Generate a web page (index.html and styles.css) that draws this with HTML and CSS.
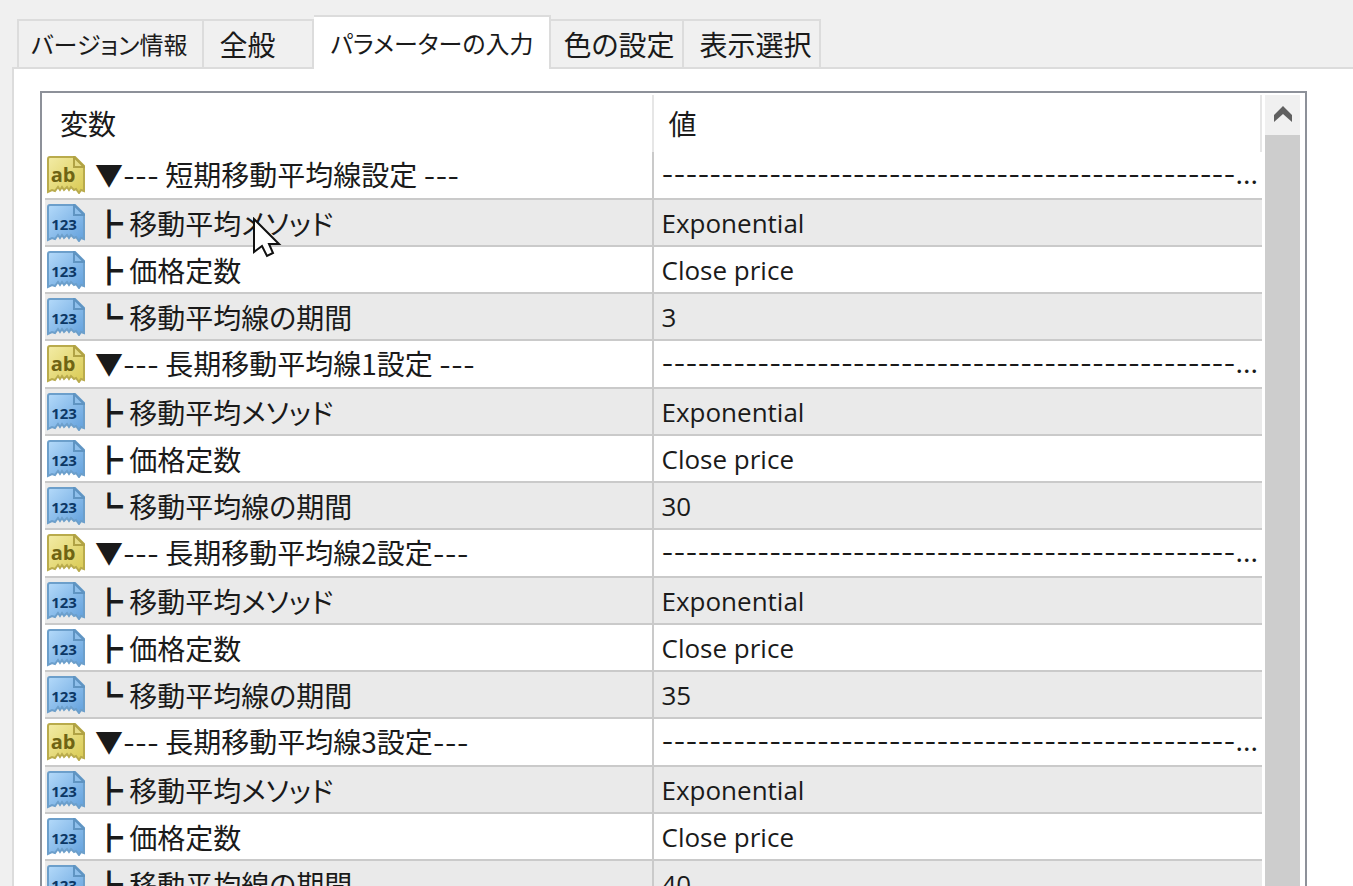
FILE: index.html
```
<!DOCTYPE html>
<html lang="ja">
<head>
    <meta charset="UTF-8">
    <meta name="viewport" content="width=device-width, initial-scale=1.0">
    <title>パラメーターの入力</title>
    <link rel="stylesheet" href="styles.css">
</head>
<body>
    <!-- shared icon shapes -->
    <svg class="defs" aria-hidden="true">
        <defs>
            <linearGradient id="yellow" x1="0" y1="0" x2="1" y2="1">
                <stop offset="0" stop-color="#f3eca6"/>
                <stop offset="1" stop-color="#d9ca52"/>
            </linearGradient>
            <linearGradient id="blue" x1="0" y1="0" x2="1" y2="1">
                <stop offset="0" stop-color="#b4dafa"/>
                <stop offset="1" stop-color="#62a0dc"/>
            </linearGradient>
            <path id="sheet" d="M3 1H28L37 10V35L34 34L32 37L29 33L27 34L24 31L22 34L20 31L17 34L15 31L13 34L11 31L8 35L5 34L1 36V3Q1 1 3 1Z"/>
        </defs>
        <symbol id="sheet-yellow" viewBox="0 0 38 38">
            <use href="#sheet" fill="url(#yellow)" stroke="#b9ab4c" stroke-width="2"/>
            <path d="M27 1V11H37Z" fill="#e6dc86" stroke="#b0a244" stroke-width="2"/>
        </symbol>
        <symbol id="sheet-blue" viewBox="0 0 38 38">
            <use href="#sheet" fill="url(#blue)" stroke="#6c9fcb" stroke-width="2"/>
            <path d="M27 1V11H37Z" fill="#8fc0ec" stroke="#5f94c2" stroke-width="2"/>
        </symbol>
    </svg>

    <div class="tabs" role="tablist">
        <button class="tab tab-version" role="tab">バージョン情報</button>
        <button class="tab tab-general" role="tab">全般</button>
        <button class="tab active" role="tab" aria-selected="true">パラメーターの入力</button>
        <button class="tab tab-color" role="tab">色の設定</button>
        <button class="tab tab-display" role="tab">表示選択</button>
    </div>

    <div class="panel" role="tabpanel">
        <div class="list">
            <table>
                <thead>
                    <tr><th>変数</th><th>値</th></tr>
                </thead>
                <tbody>
                    <tr class="group"><td><div class="name"><svg class="icon ab"><use href="#sheet-yellow"/><text x="16" y="26">ab</text></svg><span>▼<span class="dash">---</span> 短期移動平均線設定 <span class="dash">---</span></span></div></td><td class="line">------------------------------------------------...</td></tr>
                    <tr><td><div class="name"><svg class="icon num"><use href="#sheet-blue"/><text x="17" y="26">123</text></svg><span>┣ 移動平均メソッド</span></div></td><td>Exponential</td></tr>
                    <tr><td><div class="name"><svg class="icon num"><use href="#sheet-blue"/><text x="17" y="26">123</text></svg><span>┣ 価格定数</span></div></td><td>Close price</td></tr>
                    <tr><td><div class="name"><svg class="icon num"><use href="#sheet-blue"/><text x="17" y="26">123</text></svg><span>┗ 移動平均線の期間</span></div></td><td>3</td></tr>
                </tbody>
                <tbody>
                    <tr class="group"><td><div class="name"><svg class="icon ab"><use href="#sheet-yellow"/><text x="16" y="26">ab</text></svg><span>▼<span class="dash">---</span> 長期移動平均線1設定 <span class="dash">---</span></span></div></td><td class="line">------------------------------------------------...</td></tr>
                    <tr><td><div class="name"><svg class="icon num"><use href="#sheet-blue"/><text x="17" y="26">123</text></svg><span>┣ 移動平均メソッド</span></div></td><td>Exponential</td></tr>
                    <tr><td><div class="name"><svg class="icon num"><use href="#sheet-blue"/><text x="17" y="26">123</text></svg><span>┣ 価格定数</span></div></td><td>Close price</td></tr>
                    <tr><td><div class="name"><svg class="icon num"><use href="#sheet-blue"/><text x="17" y="26">123</text></svg><span>┗ 移動平均線の期間</span></div></td><td>30</td></tr>
                </tbody>
                <tbody>
                    <tr class="group"><td><div class="name"><svg class="icon ab"><use href="#sheet-yellow"/><text x="16" y="26">ab</text></svg><span>▼<span class="dash">---</span> 長期移動平均線2設定<span class="dash">---</span></span></div></td><td class="line">------------------------------------------------...</td></tr>
                    <tr><td><div class="name"><svg class="icon num"><use href="#sheet-blue"/><text x="17" y="26">123</text></svg><span>┣ 移動平均メソッド</span></div></td><td>Exponential</td></tr>
                    <tr><td><div class="name"><svg class="icon num"><use href="#sheet-blue"/><text x="17" y="26">123</text></svg><span>┣ 価格定数</span></div></td><td>Close price</td></tr>
                    <tr><td><div class="name"><svg class="icon num"><use href="#sheet-blue"/><text x="17" y="26">123</text></svg><span>┗ 移動平均線の期間</span></div></td><td>35</td></tr>
                </tbody>
                <tbody>
                    <tr class="group"><td><div class="name"><svg class="icon ab"><use href="#sheet-yellow"/><text x="16" y="26">ab</text></svg><span>▼<span class="dash">---</span> 長期移動平均線3設定<span class="dash">---</span></span></div></td><td class="line">------------------------------------------------...</td></tr>
                    <tr><td><div class="name"><svg class="icon num"><use href="#sheet-blue"/><text x="17" y="26">123</text></svg><span>┣ 移動平均メソッド</span></div></td><td>Exponential</td></tr>
                    <tr><td><div class="name"><svg class="icon num"><use href="#sheet-blue"/><text x="17" y="26">123</text></svg><span>┣ 価格定数</span></div></td><td>Close price</td></tr>
                    <tr><td><div class="name"><svg class="icon num"><use href="#sheet-blue"/><text x="17" y="26">123</text></svg><span>┗ 移動平均線の期間</span></div></td><td>40</td></tr>
                </tbody>
            </table>
            <div class="scrollbar">
                <button class="scroll-up" aria-label="上へスクロール">
                    <svg width="18" height="16" viewBox="0 0 18 16"><path d="M0 9L9 0L18 9V16L9 8L0 16Z" fill="#606060"/></svg>
                </button>
                <div class="thumb"></div>
            </div>
            <svg class="cursor" viewBox="0 0 30 42" aria-hidden="true">
                <path d="M2 2V35L10 29L15 39L21 36L17 27H27Z" fill="#fff" stroke="#111" stroke-width="2"/>
            </svg>
        </div>
    </div>
</body>
</html>
```

FILE: styles.css
```
* {
    box-sizing: border-box;
}

body {
    margin: 0;
    height: 100vh;
    overflow: hidden;
    display: flex;
    flex-direction: column;
    background: #f0f0f0;
    color: #1a1a1a;
    font-family: "Open Sans", "Noto Sans CJK JP", sans-serif;
    font-size: 26px;
    line-height: 36px;
}

.defs {
    position: absolute;
    width: 0;
    height: 0;
}

/* tabs */
.tabs {
    display: flex;
    align-items: flex-end;
    padding: 15px 0 0 17px;
}

.tab {
    height: 48px;
    padding: 0 8px 0 12px;
    border: 2px solid #dcdcdc;
    border-width: 2px 2px 0 0;
    background: #f0f0f0;
    color: #1a1a1a;
    font-family: "Noto Sans CJK JP", sans-serif;
    font-size: 28px;
    font-feature-settings: "palt";
    line-height: 46px;
    text-align: left;
    white-space: nowrap;
}

.tab-version {
    padding-right: 15px;
    border-left-width: 2px;
    font-size: 24px;
}

.tab-general {
    padding-left: 15px;
    padding-right: 37px;
}

.tab-display {
    padding-left: 15px;
}

.tab.active {
    position: relative;
    height: 54px;
    margin-bottom: -2px;
    padding: 0 16px;
    background: #fff;
    font-size: 24px;
}

/* panel */
.panel {
    flex: 1;
    margin-left: 12px;
    padding: 22px 46px 0 26px;
    border: 2px solid #dcdcdc;
    border-width: 2px 0 0 2px;
    background: #fff;
}

.list {
    position: relative;
    display: flex;
    gap: 3px;
    padding: 2px 5px 0 3px;
    border: 2px solid #8d9199;
}

table {
    flex: 1;
    width: 100%;
    min-width: 0;
    table-layout: fixed;
    border-collapse: separate;
    border-spacing: 0;
}

th {
    height: 57px;
    padding: 0 15px;
    border-right: 2px solid #e6e6e6;
    font-weight: normal;
    font-size: 28px;
    text-align: left;
}

td {
    height: 47px;
    padding: 0 8px;
    border-bottom: 2px solid #cacaca;
    white-space: nowrap;
    overflow: hidden;
}

td:first-child {
    padding: 0 2px;
    border-right: 2px solid #cacaca;
    font-family: "Noto Sans CJK JP", sans-serif;
    font-size: 28px;
    font-feature-settings: "palt";
}

.group td {
    height: 48px;
}

tr:nth-child(even) td {
    background: #eaeaea;
}

.name {
    display: flex;
    align-items: center;
    gap: 10px;
}

.icon {
    flex: none;
    width: 38px;
    height: 38px;
    font-family: "Open Sans", sans-serif;
    font-weight: bold;
    text-anchor: middle;
}

.ab {
    font-size: 20px;
    fill: #6f6414;
}

.num {
    font-size: 15px;
    fill: #0c3866;
}

.dash,
.line {
    font-family: Inter, sans-serif;
    font-size: 26px;
}

/* scrollbar */
.scrollbar {
    flex: none;
    display: flex;
    flex-direction: column;
    width: 35px;
}

.scroll-up {
    height: 40px;
    padding: 0;
    border: 0;
    background: #f0f0f0;
}

.thumb {
    flex: 1;
    background: #cdcdcd;
}

/* mouse pointer over the list */
.cursor {
    position: absolute;
    left: 210px;
    top: 124px;
    width: 30px;
    height: 42px;
}
```
